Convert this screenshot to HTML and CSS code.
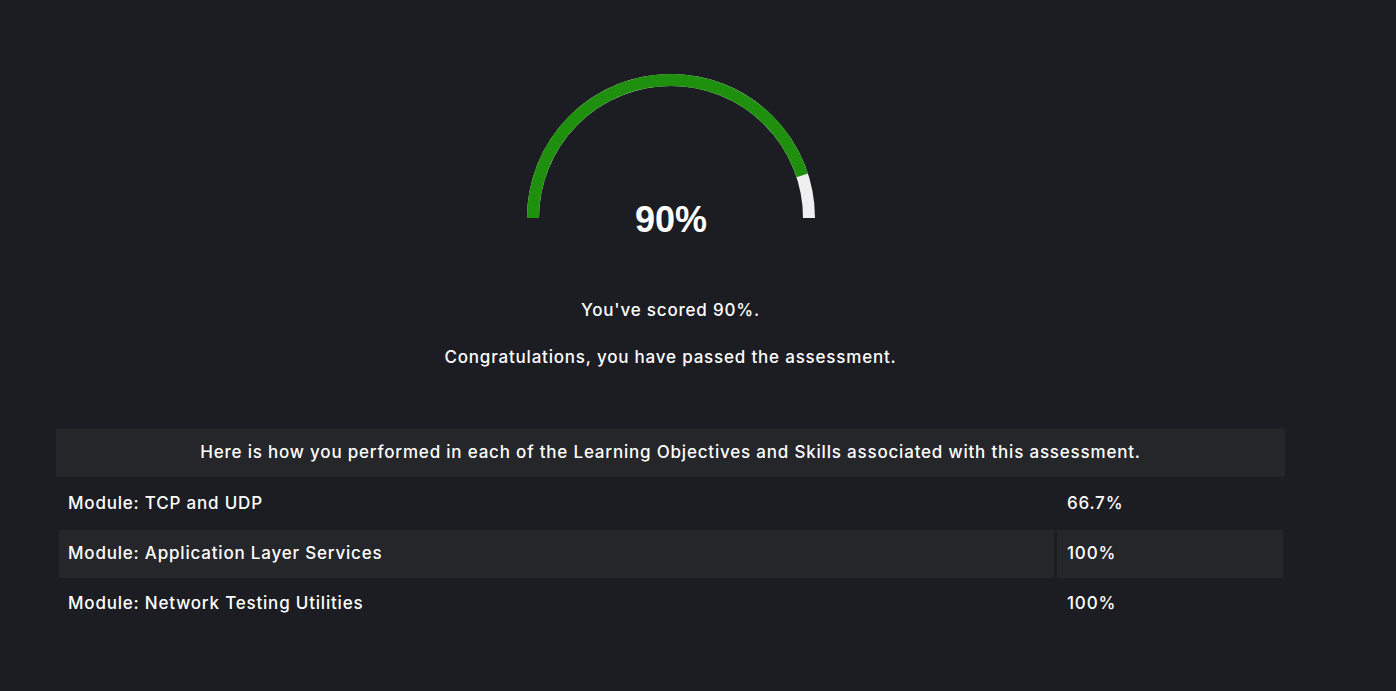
FILE: index.html
```html
<!DOCTYPE html>
<html>
<head>
<meta charset="utf-8">
<link rel="stylesheet" href="styles.css">
</head>
<body>
<div class="page">
  <div class="gauge">
    <svg width="290" height="150" viewBox="0 0 290 150" class="gauge-svg">
      <path d="M 7 144 A 138 138 0 0 1 283 144" fill="none" stroke="#efefef" stroke-width="12"/>
      <path d="M 7 144 A 138 138 0 0 1 276.25 101.36" fill="none" stroke="#1f8f0e" stroke-width="12"/>
    </svg>
    <div class="gauge-value">90%</div>
  </div>
  <p class="msg msg-score">You've scored 90%.</p>
  <p class="msg msg-pass">Congratulations, you have passed the assessment.</p>
  <div class="results">
    <div class="results-head">Here is how you performed in each of the Learning Objectives and Skills associated with this assessment.</div>
    <table class="results-table">
      <tr><td class="name">Module: TCP and UDP</td><td class="pct">66.7%</td></tr>
      <tr class="alt"><td class="name">Module: Application Layer Services</td><td class="pct">100%</td></tr>
      <tr><td class="name">Module: Network Testing Utilities</td><td class="pct">100%</td></tr>
    </table>
  </div>
</div>
</body>
</html>
```
FILE: styles.css
```css
html, body {
  margin: 0;
  padding: 0;
  background: #1c1d22;
  color: #ffffff;
  font-family: Inter, "Liberation Sans", sans-serif;
  font-weight: 500;
}
.page {
  width: 1229px;
  margin-left: 56px;
  padding-top: 74px;
}
.gauge {
  width: 290px;
  height: 164px;
  margin: 0 auto;
  position: relative;
  left: 0.5px;
}
.gauge-svg {
  display: block;
  position: absolute;
  left: 0;
  top: 0;
}
.gauge-value {
  position: absolute;
  left: 0;
  right: 0;
  top: 125px;
  text-align: center;
  font-size: 36px;
  font-weight: 700;
  font-family: "Liberation Sans", Arial, sans-serif;
}
.msg {
  margin: 0;
  text-align: center;
  font-size: 17px;
  letter-spacing: 0.8px;
  line-height: 20px;
}
.msg-score {
  margin-top: 62px;
}
.msg-pass {
  margin-top: 27px;
}
.results {
  margin-top: 62px;
}
.results-head {
  background: #25262a;
  height: 48px;
  line-height: 46px;
  text-align: center;
  font-size: 17px;
  letter-spacing: 0.8px;
}
.results-table {
  width: 1230px;
  border-spacing: 3px 2px;
  margin-top: 1px;
}
.results-table td {
  height: 48px;
  padding: 0 0 2px 9px;
  font-size: 17px;
  letter-spacing: 0.8px;
  box-sizing: border-box;
}
.results-table td.pct {
  width: 226px;
  padding-left: 10px;
}
.results-table tr.alt td {
  background: #25262a;
}
```
